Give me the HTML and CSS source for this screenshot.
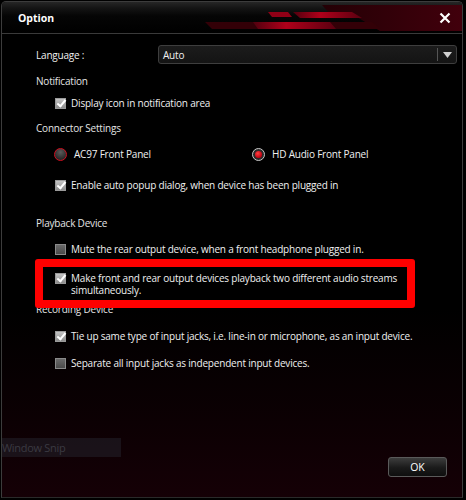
FILE: index.html
```html
<!DOCTYPE html>
<html lang="en">
<head>
    <meta charset="UTF-8">
    <meta name="viewport" content="width=device-width, initial-scale=1.0">
    <title>Option</title>
    <link rel="stylesheet" href="styles.css">
</head>
<body>
    <div class="window">
        <div class="titlebar">
            <svg class="stripes" width="466" height="33" viewBox="0 0 466 33">
                <defs>
                    <linearGradient id="darkRed" x1="0" x2="1" y1="0" y2="0">
                        <stop offset="0" stop-color="#240005"/>
                        <stop offset="1" stop-color="#42000c"/>
                    </linearGradient>
                    <linearGradient id="brightRed" x1="0" x2="1" y1="0" y2="0">
                        <stop offset="0" stop-color="#50000e"/>
                        <stop offset="0.4" stop-color="#b0001a"/>
                        <stop offset="1" stop-color="#5a0010"/>
                    </linearGradient>
                </defs>
                <polygon points="322,4 466,4 466,30 380,30 352,13 330,13" fill="url(#darkRed)"/>
                <polygon points="268,11 288,11 292,16 272,16" fill="#900016"/>
                <polygon points="293,11 352,11 362,17 300,17" fill="url(#brightRed)"/>
                <polygon points="205,21 372,21 380,28 212,28" fill="#330007"/>
                <polygon points="253,21 330,21 336,28 258,28" fill="url(#brightRed)"/>
            </svg>
            <span class="title">Option</span>
            <svg class="close" width="12" height="12" viewBox="0 0 12 12">
                <path d="M1.5 1.5 L10.5 10.5 M10.5 1.5 L1.5 10.5" stroke="#fff" stroke-width="2.2"/>
            </svg>
        </div>

        <div class="content">
            <div class="lang-row">
                <span class="lang-label">Language :</span>
                <div class="select">
                    <span class="select-value">Auto</span>
                    <span class="select-btn">
                        <svg width="9" height="6" viewBox="0 0 9 6"><polygon points="0,0 9,0 4.5,6" fill="#d0d0d0"/></svg>
                    </span>
                </div>
            </div>

            <div class="heading">Notification</div>
            <label class="check check-first on"><span class="box"></span>Display icon in notification area</label>

            <div class="heading">Connector Settings</div>
            <div class="radio-row">
                <label class="radio"><span class="dot"></span>AC97 Front Panel</label>
                <label class="radio on"><span class="dot"></span>HD Audio Front Panel</label>
            </div>
            <label class="check check-after-radio on"><span class="box"></span>Enable auto popup dialog, when device has been plugged in</label>

            <div class="heading heading-spaced">Playback Device</div>
            <label class="check check-first-wide"><span class="box"></span>Mute the rear output device, when a front headphone plugged in.</label>
            <label class="check check-multi on">
                <span class="box"></span>
                <span>Make front and rear output devices playback two different audio streams simultaneously.</span>
                <span class="highlight"></span>
            </label>

            <div class="heading heading-tight">Recording Device</div>
            <label class="check on"><span class="box"></span>Tie up same type of input jacks, i.e. line-in or microphone, as an input device.</label>
            <label class="check"><span class="box"></span>Separate all input jacks as independent input devices.</label>
        </div>

        <div class="footer">
            <button class="ok">OK</button>
        </div>

        <div class="snip">Window Snip</div>
    </div>
</body>
</html>
```

FILE: styles.css
```css
* {
    box-sizing: border-box;
}
html, body {
    margin: 0;
    background: #000;
}
body {
    font-family: "Open Sans", "Liberation Sans", sans-serif;
    font-size: 10px;
    letter-spacing: -0.2px;
    color: #f0f0f0;
    width: 466px;
    height: 500px;
    overflow: hidden;
}
.window {
    position: relative;
    margin: 1px 3px 0 1px;
    height: 497px;
    display: flex;
    flex-direction: column;
    border: 1px solid #3c3c3c;
    border-bottom-color: #2a2a2a;
    border-radius: 5px 5px 0 0;
    background: linear-gradient(to bottom, #000 0%, #000 62%, #0c0003 85%, #150006 100%);
    overflow: hidden;
}
.titlebar {
    position: relative;
    height: 32px;
    flex: none;
    display: flex;
    align-items: center;
    padding: 0 10px 0 16px;
    border-bottom: 1px solid #3a3a3a;
    background: linear-gradient(to bottom, #262626 0%, #141414 20%, #050505 45%, #000 100%);
}
.stripes {
    position: absolute;
    left: -2px;
    top: -1px;
}
.title {
    position: relative;
    font-weight: bold;
    font-size: 10.5px;
    letter-spacing: 0;
    color: #fff;
}
.close {
    position: relative;
    margin-left: auto;
    margin-right: 1px;
}
.content {
    flex: 1;
    padding: 11px 0 0 34px;
}
.lang-row {
    display: flex;
    align-items: center;
    height: 19px;
}
.lang-label {
    width: 122px;
}
.select {
    display: flex;
    align-items: center;
    width: 299px;
    height: 19px;
    border: 1px solid #3e3e3e;
    border-radius: 3px;
    background: linear-gradient(to bottom, #1c1c1c, #141414);
}
.select-value {
    flex: 1;
    padding-left: 4px;
}
.select-btn {
    display: flex;
    align-items: center;
    justify-content: center;
    width: 19px;
    height: 13px;
    border-left: 1px solid #555;
}
.heading {
    margin-top: 9px;
    height: 16px;
    line-height: 16px;
    color: #e4e4e4;
}
.heading-spaced {
    margin-top: 22px;
}
.heading-tight {
    margin-top: 5px;
}
.check {
    position: relative;
    display: flex;
    align-items: center;
    gap: 5px;
    margin-top: 11px;
    padding-left: 19px;
    height: 16px;
    line-height: 16px;
}
.check-first {
    margin-top: 6px;
}
.check-first-wide {
    margin-top: 10px;
}
.check-after-radio {
    margin-top: 15px;
}
.check-multi {
    align-items: flex-start;
    margin-top: 15px;
    height: 24px;
    line-height: 12px;
    padding-right: 50px;
}
.check-multi .box {
    margin-top: 1px;
}
.box {
    flex: none;
    width: 11px;
    height: 11px;
    border: 1px solid #8a8a8a;
    background: linear-gradient(to bottom, #6a6a6a, #4a4a4a);
}
.check.on .box {
    border-color: #9a9a9a;
    background: linear-gradient(to bottom, #c4c4c4, #8c8c8c);
    position: relative;
}
.check.on .box::after {
    content: "";
    position: absolute;
    left: 3px;
    top: -1px;
    width: 3px;
    height: 7px;
    border: solid #fff;
    border-width: 0 2px 2px 0;
    transform: rotate(40deg);
}
.highlight {
    position: absolute;
    left: -1px;
    top: -13px;
    width: 380px;
    height: 49px;
    border: 8px solid #ff0000;
    border-radius: 3px;
}
.radio-row {
    display: flex;
    margin-top: 10px;
    padding-left: 18px;
    height: 16px;
}
.radio {
    display: flex;
    align-items: center;
    gap: 7px;
    width: 198px;
}
.dot {
    flex: none;
    position: relative;
    width: 13px;
    height: 13px;
    border-radius: 50%;
    border: 1px solid #d01020;
    background: radial-gradient(circle at 50% 30%, #5a5a5a, #2a2a2a 70%);
}
.radio.on .dot {
    border-color: #c8c8c8;
    background: #2a2a2a;
}
.radio.on .dot::after {
    content: "";
    position: absolute;
    left: 2px;
    top: 2px;
    width: 7px;
    height: 7px;
    border-radius: 50%;
    background: radial-gradient(circle at 40% 35%, #ff4040, #c00010 70%);
}
.footer {
    display: flex;
    justify-content: flex-end;
    padding: 0 15px 20px 0;
}
.ok {
    width: 59px;
    height: 20px;
    border: 1px solid #5a5a5a;
    border-radius: 3px;
    background: linear-gradient(to bottom, #3c3c3c, #1a1a1a 55%, #0e0e0e);
    color: #fff;
    font-family: "Open Sans", "Liberation Sans", sans-serif;
    font-size: 10.5px;
    padding: 0;
    cursor: pointer;
}
.snip {
    position: absolute;
    left: -1px;
    top: 436px;
    width: 120px;
    height: 19px;
    line-height: 19px;
    padding-left: 1px;
    background: rgba(40, 40, 50, 0.45);
    color: #3a3a42;
    font-size: 11px;
    letter-spacing: -0.3px;
}
```
